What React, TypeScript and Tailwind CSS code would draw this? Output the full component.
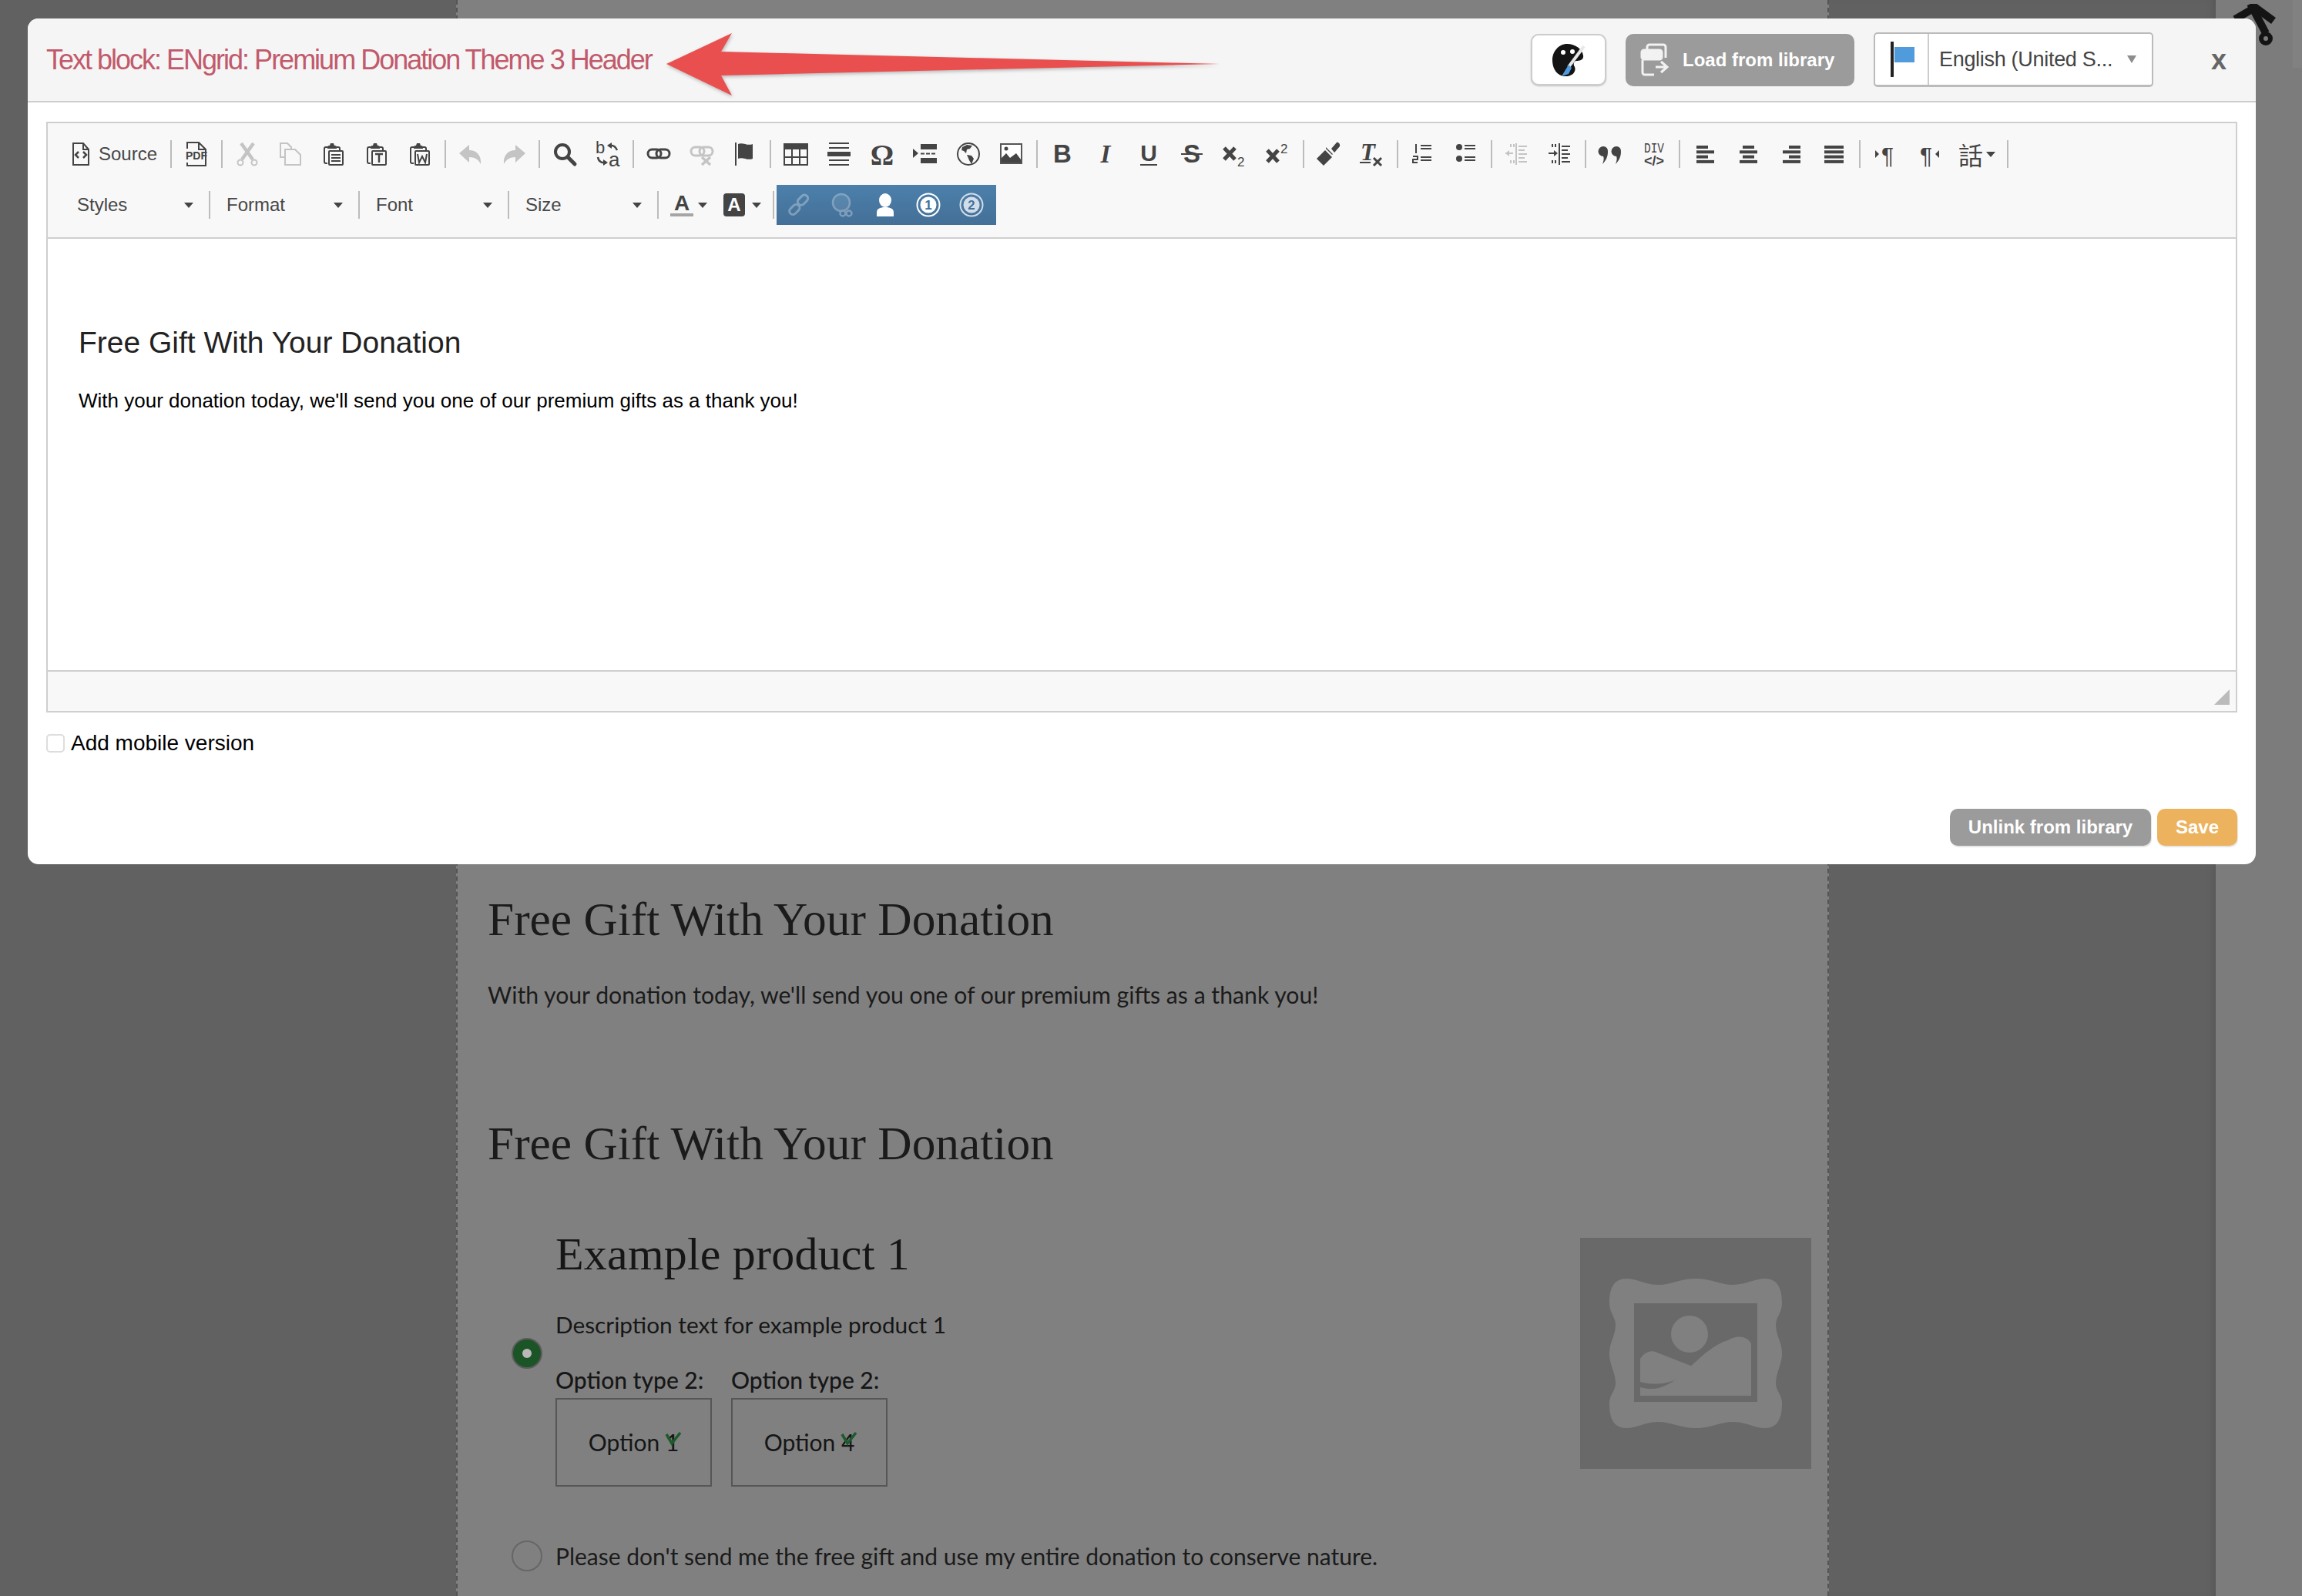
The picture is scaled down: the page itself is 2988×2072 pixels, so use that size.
import React from "react";

const sans = "font-['Liberation_Sans',Arial,sans-serif]";
const human = "font-['Lato',sans-serif]";
const serif = "font-['Liberation_Serif',serif]";

function Svg({ children, off }: { children: React.ReactNode; off?: boolean }) {
  // extra room round the 32 unit drawing so tall glyphs are not clipped
  return (
    <svg viewBox="-4 -8 40 48" className="w-10 h-12 shrink-0" fill="none" stroke={off ? "#c4c4c4" : "#444"} strokeWidth={2}>
      <g style={{ color: off ? "#c4c4c4" : "#444" }}>{children}</g>
    </svg>
  );
}

const lbl = { fontFamily: "Liberation Sans, sans-serif", fontWeight: 700, fill: "currentColor", stroke: "none" } as const;

function Paste({ children }: { children: React.ReactNode }) {
  return (
    <Svg>
      <path d="M8 7H6a2 2 0 0 0-2 2v17a2 2 0 0 0 2 2h2M20 7h2a2 2 0 0 1 2 2v2" />
      <path d="M8 7c0-2 2-2 3-2l1-3h4l1 3c1 0 3 0 3 2v2H8z" fill="#444" stroke="none" />
      <rect x="10" y="12" width="18" height="18" rx="1" />
      {children}
    </Svg>
  );
}

function Bars({ rows }: { rows: [number, number][] }) {
  return (
    <Svg>
      {rows.map(([x, w], i) => (
        <rect key={i} x={x} y={5 + i * 6.3} width={w} height="4" fill="#444" stroke="none" />
      ))}
    </Svg>
  );
}

function Chain({ off }: { off?: boolean }) {
  return (
    <Svg off={off}>
      <g strokeWidth={3}>
        <rect x="2" y={off ? 7 : 10} width="17" height="11" rx="5.5" />
        <rect x="13" y={off ? 7 : 10} width="17" height="11" rx="5.5" />
      </g>
      {off && <path d="M16 20l11 10M27 20L16 30" strokeWidth={3.5} />}
    </Svg>
  );
}

const icons: Record<string, React.ReactNode> = {
  pdf: (
    <Svg>
      <path d="M4 9V1h15l9 9v21H4v-4M19 1v9h9" />
      <text x="16" y="23" textAnchor="middle" fontSize="14" style={lbl}>PDF</text>
    </Svg>
  ),
  cut: (
    <Svg off>
      <circle cx="7" cy="27" r="3.5" />
      <circle cx="25" cy="27" r="3.5" />
      <path d="M9 23L24 2M23 23L8 2" strokeWidth={4.5} />
    </Svg>
  ),
  copy: (
    <Svg off>
      <path d="M8 20H3V2h9l5 5v3" />
      <path d="M9 10h13l7 7v13H9z" />
    </Svg>
  ),
  pasteText: (
    <Paste>
      <path d="M13 17h12M13 21h12M13 25h12" />
    </Paste>
  ),
  pasteT: (
    <Paste>
      <path d="M14 16h10M19 16v11" strokeWidth={2.5} />
    </Paste>
  ),
  pasteW: (
    <Paste>
      <path d="M13 16l2 11 4-8 4 8 2-11" />
    </Paste>
  ),
  undo: (
    <Svg off>
      <path d="M1 15L14 4v7c10 0 16 7 15 18-3-6-8-9-15-9v7z" fill="#c4c4c4" stroke="none" />
    </Svg>
  ),
  redo: (
    <Svg off>
      <path d="M31 15L18 4v7C8 11 2 18 3 29c3-6 8-9 15-9v7z" fill="#c4c4c4" stroke="none" />
    </Svg>
  ),
  find: (
    <Svg>
      <circle cx="13" cy="13" r="9" strokeWidth={4} />
      <path d="M20 20l9 9" strokeWidth={5} strokeLinecap="round" />
    </Svg>
  ),
  replace: (
    <Svg>
      <text x="0" y="15" fontSize="22" style={{ ...lbl, fontWeight: 400 }}>b</text>
      <text x="17" y="32" fontSize="26" style={{ ...lbl, fontWeight: 400 }}>a</text>
      <path d="M17 5c5-1 9 1 11 6M3 20c1 6 5 8 11 7" strokeWidth={2.5} />
      <path d="M15 5l6-4v8zM16 27l-6-4v8z" fill="#444" stroke="none" />
    </Svg>
  ),
  link: <Chain />,
  unlink: <Chain off />,
  anchor: (
    <Svg>
      <path d="M4 1v30" />
      <path d="M7 3c6-3 12 3 19 0v19c-7 3-13-3-19 0z" fill="#444" stroke="none" />
    </Svg>
  ),
  table: (
    <Svg>
      <rect x="1" y="3" width="30" height="27" />
      <rect x="1" y="3" width="30" height="7" fill="#444" stroke="none" />
      <path d="M11 10v20M21 10v20M1 20h30" />
    </Svg>
  ),
  hr: (
    <Svg>
      <path d="M3 2h26M3 8h26M3 24h26M3 30h26" />
      <rect x="1" y="13" width="30" height="6" fill="#444" stroke="none" />
    </Svg>
  ),
  omega: (
    <Svg>
      <text x="16" y="30" textAnchor="middle" fontSize="38" style={{ ...lbl, fontFamily: "Liberation Serif, serif" }}>Ω</text>
    </Svg>
  ),
  pagebreak: (
    <Svg>
      <path d="M0 9l7 6-7 6z" fill="#444" stroke="none" />
      <rect x="10" y="3" width="21" height="7" fill="#444" stroke="none" />
      <rect x="10" y="21" width="21" height="7" fill="#444" stroke="none" />
      <path d="M10 15.5h21" strokeDasharray="5 2" />
    </Svg>
  ),
  globe: (
    <Svg>
      <circle cx="16" cy="16" r="14" />
      <path d="M8 7l6-3 7 1-3 4-4 1-1 5-3-3-3-1zM14 17l6 1 3 4-3 7-3-5z" fill="#444" stroke="none" />
    </Svg>
  ),
  image: (
    <Svg>
      <rect x="2" y="3" width="27" height="25" fill="#fff" stroke="#555" />
      <circle cx="9" cy="9" r="2.5" fill="#444" stroke="none" />
      <path d="M3 27v-6l6-6 5 6 4-3 4-3 6 8v4z" fill="#444" stroke="none" />
    </Svg>
  ),
  b: (
    <Svg>
      <text x="16" y="27" textAnchor="middle" fontSize="33" style={lbl}>B</text>
    </Svg>
  ),
  i: (
    <Svg>
      <text x="16" y="27" textAnchor="middle" fontSize="33" style={{ ...lbl, fontFamily: "Liberation Serif, serif", fontStyle: "italic" }}>I</text>
    </Svg>
  ),
  u: (
    <Svg>
      <text x="16" y="25" textAnchor="middle" fontSize="30" style={lbl}>U</text>
      <path d="M5 30h22" />
    </Svg>
  ),
  s: (
    <Svg>
      <text x="16" y="27" textAnchor="middle" fontSize="33" style={lbl}>S</text>
      <path d="M2 16h28" />
    </Svg>
  ),
  sub: (
    <Svg>
      <path d="M2 8l14 15M16 8L2 23" strokeWidth={5} />
      <text x="19" y="32" fontSize="17" style={{ ...lbl, fontWeight: 400 }}>2</text>
    </Svg>
  ),
  sup: (
    <Svg>
      <path d="M2 11l14 15M16 11L2 26" strokeWidth={5} />
      <text x="19" y="15" fontSize="17" style={{ ...lbl, fontWeight: 400 }}>2</text>
    </Svg>
  ),
  brush: (
    <Svg>
      <path d="M0 22L11 11l9 9L9 31z" fill="#444" stroke="none" />
      <path d="M12 9l8 8 3-3-4-5 7-8c2-1 5 2 4 5l-6 7-3 3-9-9z" fill="#444" stroke="none" />
    </Svg>
  ),
  tx: (
    <Svg>
      <text x="1" y="24" fontSize="31" style={{ ...lbl, fontFamily: "Liberation Serif, serif", fontStyle: "italic" }}>T</text>
      <path d="M0 27h14" />
      <path d="M18 21l10 10M28 21L18 31" strokeWidth={3} />
    </Svg>
  ),
  ol: (
    <Svg>
      <path d="M13 5h14M13 9h14M13 20h14M13 24h14" />
      <path d="M7 3v12M3 19h6v4H3v4h6" />
    </Svg>
  ),
  ul: (
    <Svg>
      <circle cx="7" cy="7" r="4" fill="#444" stroke="none" />
      <circle cx="7" cy="22" r="4" fill="#444" stroke="none" />
      <path d="M14 5h14M14 9h14M14 20h14M14 24h14" />
    </Svg>
  ),
  outdent: (
    <Svg off>
      <path d="M15 2v28" />
      <path d="M18 6h11M18 11h8M18 16h11M18 21h8M18 26h11M1 15h10" />
      <path d="M1 15l5-4v8z" fill="#c4c4c4" stroke="none" />
      <path d="M8 3v4M12 3v4M8 24v4M12 24v4" />
    </Svg>
  ),
  indent: (
    <Svg>
      <path d="M15 2v28" />
      <path d="M18 6h11M18 11h8M18 16h11M18 21h8M18 26h11M1 15h8" />
      <path d="M13 15l-5-4v8z" fill="#444" stroke="none" />
      <path d="M6 3v4M10 3v4M6 24v4M10 24v4" />
    </Svg>
  ),
  quote: (
    <Svg>
      <path d="M6 6a6 6 0 0 1 6 7c0 7-3 12-7 16 2-5 2-8 1-10A6.500 6.500 0 0 1 6 6zM23 6a6 6 0 0 1 6 7c0 7-3 12-7 16 2-5 2-8 1-10a6.500 6.500 0 0 1 0-13z" fill="#444" stroke="none" />
    </Svg>
  ),
  div: (
    <Svg>
      <text x="16" y="14" textAnchor="middle" fontSize="19" textLength={26} lengthAdjust="spacingAndGlyphs" style={{ ...lbl, fontFamily: "Liberation Mono, monospace", fontWeight: 400 }}>DIV</text>
      <text x="16" y="31" textAnchor="middle" fontSize="18" textLength={26} lengthAdjust="spacingAndGlyphs" style={lbl}>&lt;/&gt;</text>
    </Svg>
  ),
  left: <Bars rows={[[5, 15], [5, 23], [5, 15], [5, 23]]} />,
  center: <Bars rows={[[9, 15], [5, 23], [9, 15], [5, 23]]} />,
  right: <Bars rows={[[13, 15], [5, 23], [13, 15], [5, 23]]} />,
  justify: <Bars rows={[[3, 25], [3, 25], [3, 25], [3, 25]]} />,
  ltr: (
    <Svg>
      <path d="M3 11l5 5-5 5z" fill="#444" stroke="none" />
      <text x="19" y="28" textAnchor="middle" fontSize="30" style={{ ...lbl, fontWeight: 400 }}>¶</text>
    </Svg>
  ),
  rtl: (
    <Svg>
      <path d="M30 11l-5 5 5 5z" fill="#444" stroke="none" />
      <text x="13" y="28" textAnchor="middle" fontSize="30" style={{ ...lbl, fontWeight: 400 }}>¶</text>
    </Svg>
  ),
};

const groups = [
  ["pdf"],
  ["cut", "copy", "pasteText", "pasteT", "pasteW"],
  ["undo", "redo"],
  ["find", "replace"],
  ["link", "unlink", "anchor"],
  ["table", "hr", "omega", "pagebreak", "globe", "image"],
  ["b", "i", "u", "s", "sub", "sup"],
  ["brush", "tx"],
  ["ol", "ul"],
  ["outdent", "indent"],
  ["quote", "div"],
  ["left", "center", "right", "justify"],
];

function Sep() {
  return (
    <div className="w-[10px] h-9 shrink-0 pl-1">
      <div className="w-[2px] h-full bg-[#bcbcbc]" />
    </div>
  );
}

function Caret({ className }: { className?: string }) {
  return <div className={`w-0 h-0 border-x-[6px] border-x-transparent border-t-[7px] border-t-[#444] ${className ?? ""}`} />;
}

function Combo({ label }: { label: string }) {
  return (
    <div className="w-[184px] h-9 pl-[17px] pr-[16px] flex items-center justify-between text-[24px] text-[#474747]">
      <span>{label}</span>
      <Caret />
    </div>
  );
}

function Toolbar() {
  return (
    <div className={`bg-[#f8f8f8] border-b-2 border-[#cfcfcf] pt-[22px] pb-[24px] flex flex-col gap-[30px] ${sans}`}>
      <div className="flex items-center pl-8 h-9">
        <div className="w-[123px] flex items-center gap-[12px] text-[24px] text-[#474747]">
          <svg viewBox="0 0 22 30" className="w-[22px] h-[30px]" fill="none" stroke="#444" strokeWidth={2}>
            <path d="M1 1h13l7 8v20H1zM14 1v8h7" />
            <path d="M8 12l-4 4 4 4M14 12l4 4-4 4" strokeWidth={2.5} />
          </svg>
          <span>Source</span>
        </div>
        <Sep />
        {groups.map((g, i) => (
          <React.Fragment key={i}>
            {g.map((name) => (
              <div key={name} className="w-14 h-9 flex items-center justify-center">
                {icons[name]}
              </div>
            ))}
            <Sep />
          </React.Fragment>
        ))}
        <div className="w-14 h-9 flex items-center justify-center">{icons.ltr}</div>
        <div className="w-14 h-9 flex items-center justify-center">{icons.rtl}</div>
        <div className="w-[70px] h-9 flex items-center justify-center gap-1 text-[32px] leading-none text-[#444] font-['Noto_Sans_CJK_TC',sans-serif]">
          <span>話</span>
          <Caret />
        </div>
        <Sep />
      </div>
      <div className="flex items-center pl-[21px] h-9">
        <Combo label="Styles" />
        <Sep />
        <Combo label="Format" />
        <Sep />
        <Combo label="Font" />
        <Sep />
        <Combo label="Size" />
        <Sep />
        <div className="w-[70px] h-9 flex items-center pl-[6px] gap-[1px]">
          <svg viewBox="-4 -8 40 48" className="w-10 h-12 shrink-0">
            <text x="16" y="23" textAnchor="middle" fontSize="28" style={{ ...lbl, fill: "#444" }}>A</text>
            <rect x="1" y="27" width="30" height="4" fill="#a5a5a5" />
          </svg>
          <Caret />
        </div>
        <div className="w-[70px] h-9 flex items-center pl-[10px] gap-[7px]">
          <div className="w-[28px] h-[30px] rounded-[4px] bg-[#444] text-white font-bold text-[24px] leading-[30px] text-center">A</div>
          <Caret className="ml-[2px]" />
        </div>
        <Sep />
        <div className="h-[52px] -my-2 w-[285px] -ml-[1px] bg-gradient-to-b from-[#4b80ab] to-[#446f97] flex items-center pl-[1px]">
          <BlueIcons />
        </div>
      </div>
    </div>
  );
}

function BlueIcons() {
  return (
    <>
      <div className="w-14 flex justify-center opacity-30">
        <svg viewBox="0 0 32 32" className="w-8 h-8" fill="none" stroke="#fff" strokeWidth={3}>
          <rect x="17" y="2" width="9" height="15" rx="4.5" transform="rotate(45 21 9)" />
          <rect x="6" y="15" width="9" height="15" rx="4.5" transform="rotate(45 11 22)" />
        </svg>
      </div>
      <div className="w-14 flex justify-center opacity-30">
        <svg viewBox="0 0 32 32" className="w-8 h-8" fill="none" stroke="#fff" strokeWidth={2.5}>
          <circle cx="15" cy="13" r="11" fill="#fff" fillOpacity={0.3} />
          <circle cx="17" cy="27" r="3.5" />
          <circle cx="25" cy="27" r="3.5" />
        </svg>
      </div>
      <div className="w-14 flex justify-center">
        <svg viewBox="0 0 32 32" className="w-8 h-8" fill="#fff">
          <ellipse cx="16" cy="10" rx="8" ry="9" />
          <path d="M5 31v-5c0-5 4-7 11-7s11 2 11 7v5z" />
        </svg>
      </div>
      {["1", "2"].map((n) => (
        <div key={n} className={`w-14 flex justify-center ${n === "2" ? "opacity-75" : ""}`}>
          <svg viewBox="0 0 32 32" className="w-8 h-8" fill="none" stroke="#fff" strokeWidth={2}>
            <circle cx="16" cy="16" r="14.5" />
            <circle cx="16" cy="16" r="10.5" fill="#fff" stroke="none" />
            <text x="16" y="22" textAnchor="middle" fontSize="17" style={{ ...lbl, fill: "#3f6f99" }}>{n}</text>
          </svg>
        </div>
      ))}
    </>
  );
}

function Product() {
  return (
    <div className="mt-[91px] ml-[31px] flex items-center">
      <div className="w-10 h-10 rounded-full bg-[#1b5427] border-2 border-[#5c5c5c] flex items-center justify-center shrink-0">
        <div className="w-3 h-3 rounded-full bg-[#b9b9b9]" />
      </div>
      <div className="ml-[17px] h-[300px] text-[#161616]">
        <h3 className={`${serif} text-[60px] leading-[42px] tracking-[0.2px]`}>Example product 1</h3>
        <p className="text-[29.800px] leading-[40px] mt-[51px]">Description text for example product 1</p>
        <div className="flex gap-[25px] mt-[34px]">
          {["1", "4"].map((n) => (
            <div key={n} className="w-[203px]">
              <div className="text-[30px] leading-[34px] font-medium whitespace-nowrap">Option type 2:</div>
              <div className="mt-[7px] h-[115px] border-2 border-[#565656] flex items-center justify-center text-[30px]">
                <span className="relative">
                  Option {n}
                  <svg viewBox="0 0 22 22" className="absolute right-[-4px] top-[8px] w-[22px] h-[22px]" fill="none" stroke="#1d5a2c" strokeWidth={3.5}>
                    <path d="M2 4l7 12L20 2" />
                  </svg>
                </span>
              </div>
            </div>
          ))}
        </div>
      </div>
      <div className="ml-auto w-[300px] h-[300px] bg-[#696969] flex items-center justify-center">
        <svg viewBox="0 0 224 194" className="w-[224px] h-[194px]">
          <path
            d="M22 0C36 0 46 8 64 8C80 8 92 0 112 0C132 0 144 8 160 8C178 8 188 0 202 0C218 0 224 12 224 32C224 44 216 50 216 60C216 74 224 82 224 97C224 112 216 122 216 136C216 146 224 150 224 162C224 182 218 194 202 194C188 194 178 186 160 186C144 186 132 194 112 194C92 194 80 186 64 186C46 186 36 194 22 194C6 194 0 182 0 162C0 150 8 146 8 136C8 122 0 112 0 97C0 82 8 74 8 60C8 50 0 44 0 32C0 12 6 0 22 0Z"
            fill="#808080"
          />
          <rect x="32" y="32" width="160" height="128" fill="#696969" />
          <ellipse cx="104" cy="72" rx="24" ry="24" fill="#808080" />
          <path d="M40 104C46 95 54 92 62 96L108 114C96 130 72 142 40 134Z" fill="#808080" />
          <path d="M40 141C64 148 80 136 95 124C115 105 135 85 154 80C165 73 178 74 184 84V152H40Z" fill="#808080" />
        </svg>
      </div>
    </div>
  );
}

export default function App() {
  return (
    <div className="relative w-[2988px] h-[2072px] overflow-hidden bg-[#616161] flex">
      <div className="w-[592px] shrink-0" />

      {/* Page behind the dialog */}
      <main className={`w-[1782px] shrink-0 bg-[#808080] border-x-2 border-dashed border-[#555] pl-[39px] pr-[21px] pt-[1161px] text-[#1b1b1b] ${human}`}>
        <h2 className={`${serif} text-[61.400px] leading-[64px] whitespace-nowrap`}>Free Gift With Your Donation</h2>
        <p className="mt-[44px] text-[30.200px] leading-[44px]">With your donation today, we'll send you one of our premium gifts as a thank you!</p>
        <h2 className={`${serif} text-[61.400px] leading-[64px] mt-[139px] whitespace-nowrap`}>Free Gift With Your Donation</h2>
        <Product />
        <div className="mt-[93px] ml-[31px] flex items-center gap-[17px] text-[30px] leading-[38px]">
          <div className="w-10 h-10 rounded-full border-2 border-[#666]" />
          <span>Please don't send me the free gift and use my entire donation to conserve nature.</span>
        </div>
      </main>

      <div className="flex-1 shadow-[inset_-8px_0_8px_-6px_#555]" />
      <div className="relative w-[112px] shrink-0 bg-[#7c7c7c] pl-[21px] pt-[5px]">
        <svg viewBox="0 0 60 54" className="w-[60px] h-[54px]" fill="none" stroke="#141414" strokeWidth={10}>
          <path d="M24 0L44 38" />
          <circle cx="44" cy="45" r="6" strokeWidth={6} />
          <path d="M4 20L28 6M28 3L54 22" />
        </svg>
        <div className="absolute top-0 right-0 w-3 h-[88px] bg-[#818181]" />
      </div>

      {/* Dialog */}
      <section className={`absolute left-9 top-6 w-[2892px] h-[1098px] rounded-[14px] overflow-hidden bg-white flex flex-col ${sans}`}>
        <header className="relative h-[109px] shrink-0 bg-[#f5f5f5] border-b-2 border-[#cdcdcd] flex items-center pl-6">
          <h1 className="text-[36px] leading-none tracking-[-2px] text-[#c25a6b] whitespace-nowrap">Text block: ENgrid: Premium Donation Theme 3 Header</h1>

          <svg viewBox="0 0 720 82" className="absolute left-[829px] top-[19px] w-[720px] h-[82px] drop-shadow-[1px_2px_2px_rgba(0,0,0,0.25)]">
            <path d="M0 40L85 0 71 24 718 40 71 55l14 26z" fill="#ea4f4f" />
          </svg>

          <div className="ml-auto flex items-center gap-[25px]">
            <button className="w-[98px] h-[67px] bg-white rounded-[10px] border-2 border-[#ccc] shadow-[0_1px_2px_rgba(0,0,0,0.2)] flex items-center justify-center">
              <svg viewBox="0 0 48 48" className="w-12 h-12">
                <path d="M22 3c11 0 20 7 21 15 1 6-5 7-9 7-4 1-4 5-2 8 2 5-2 12-12 12C9 45 3 35 3 24S11 3 22 3z" fill="#141414" />
                <circle cx="17" cy="14" r="3" fill="#fff" />
                <circle cx="29" cy="13" r="3" fill="#fff" />
                <path d="M44 6L24 33" stroke="#e8e8e8" strokeWidth={4} />
                <path d="M24 30l4 4-4 8-9 3z" fill="#4f9bdc" />
              </svg>
            </button>
            <button className="w-[297px] h-[68px] bg-[#9b9b9b] rounded-[10px] flex items-center gap-[17px] pl-[19px] text-white font-bold text-[24px]">
              <svg viewBox="0 0 38 44" className="w-[38px] h-[44px]" fill="none" stroke="#f2f2f2" strokeWidth={3}>
                <path d="M9 8V5a3 3 0 0 1 3-3h18a3 3 0 0 1 3 3v14" />
                <rect x="2" y="9" width="26" height="12" rx="3" fill="#f2f2f2" />
                <path d="M3 22v16a3 3 0 0 0 3 3h12M20 31h14M27 24l8 7-8 7" />
              </svg>
              <span>Load from library</span>
            </button>
            <div className="w-[363px] h-[71px] bg-white rounded-[5px] border-2 border-[#bbb] border-b-[3px] flex items-center font-normal">
              <div className="w-[70px] h-full border-r-2 border-[#ccc] flex items-center justify-center shrink-0">
                <svg viewBox="0 0 34 46" className="w-[34px] h-[46px]">
                  <path d="M5 1v44" stroke="#222" strokeWidth={4} strokeLinecap="round" />
                  <rect x="8" y="7" width="26" height="20" fill="#4f9bdc" />
                </svg>
              </div>
              <span className="ml-[13px] text-[27px] tracking-[-0.3px] text-[#444] whitespace-nowrap">English (United S...</span>
              <div className="ml-auto mr-[20px] w-0 h-0 border-x-[6px] border-x-transparent border-t-[10px] border-t-[#8d8d8d]" />
            </div>
          </div>
          <span className="ml-[75px] mr-[38px] text-[36px] font-bold text-[#666] leading-none">x</span>
        </header>

        <div className="flex-1 flex flex-col px-6 pt-[25px] pb-6">
          <div className="border-2 border-[#cfcfcf]">
            <Toolbar />
            <div className="h-[560px] bg-white pl-[40px] pt-[112px] text-[#222]">
              <h2 className="text-[39px] leading-[46px]">Free Gift With Your Donation</h2>
              <p className="mt-[36px] text-[26px] leading-[32px] text-black">With your donation today, we'll send you one of our premium gifts as a thank you!</p>
            </div>
            <div className="relative h-[53px] bg-[#f8f8f8] border-t-2 border-[#cfcfcf]">
              <div className="absolute right-2 bottom-2 w-0 h-0 border-l-[20px] border-l-transparent border-b-[20px] border-b-[#bbb]" />
            </div>
          </div>

          <label className="mt-[24px] flex items-center gap-2 text-[28px] leading-[32px] text-black">
            <span className="w-6 h-6 rounded-[5px] border-2 border-[#ddd] bg-white" />
            Add mobile version
          </label>

          <div className="mt-auto flex justify-end gap-2 font-bold text-[24px] text-white">
            <button className="w-[261px] h-12 rounded-[10px] bg-[#9b9b9b] shadow-[1px_2px_1px_rgba(0,0,0,0.1)]">Unlink from library</button>
            <button className="w-[104px] h-12 rounded-[10px] bg-[#ecb25e] shadow-[1px_2px_1px_rgba(0,0,0,0.1)]">Save</button>
          </div>
        </div>
      </section>
    </div>
  );
}
